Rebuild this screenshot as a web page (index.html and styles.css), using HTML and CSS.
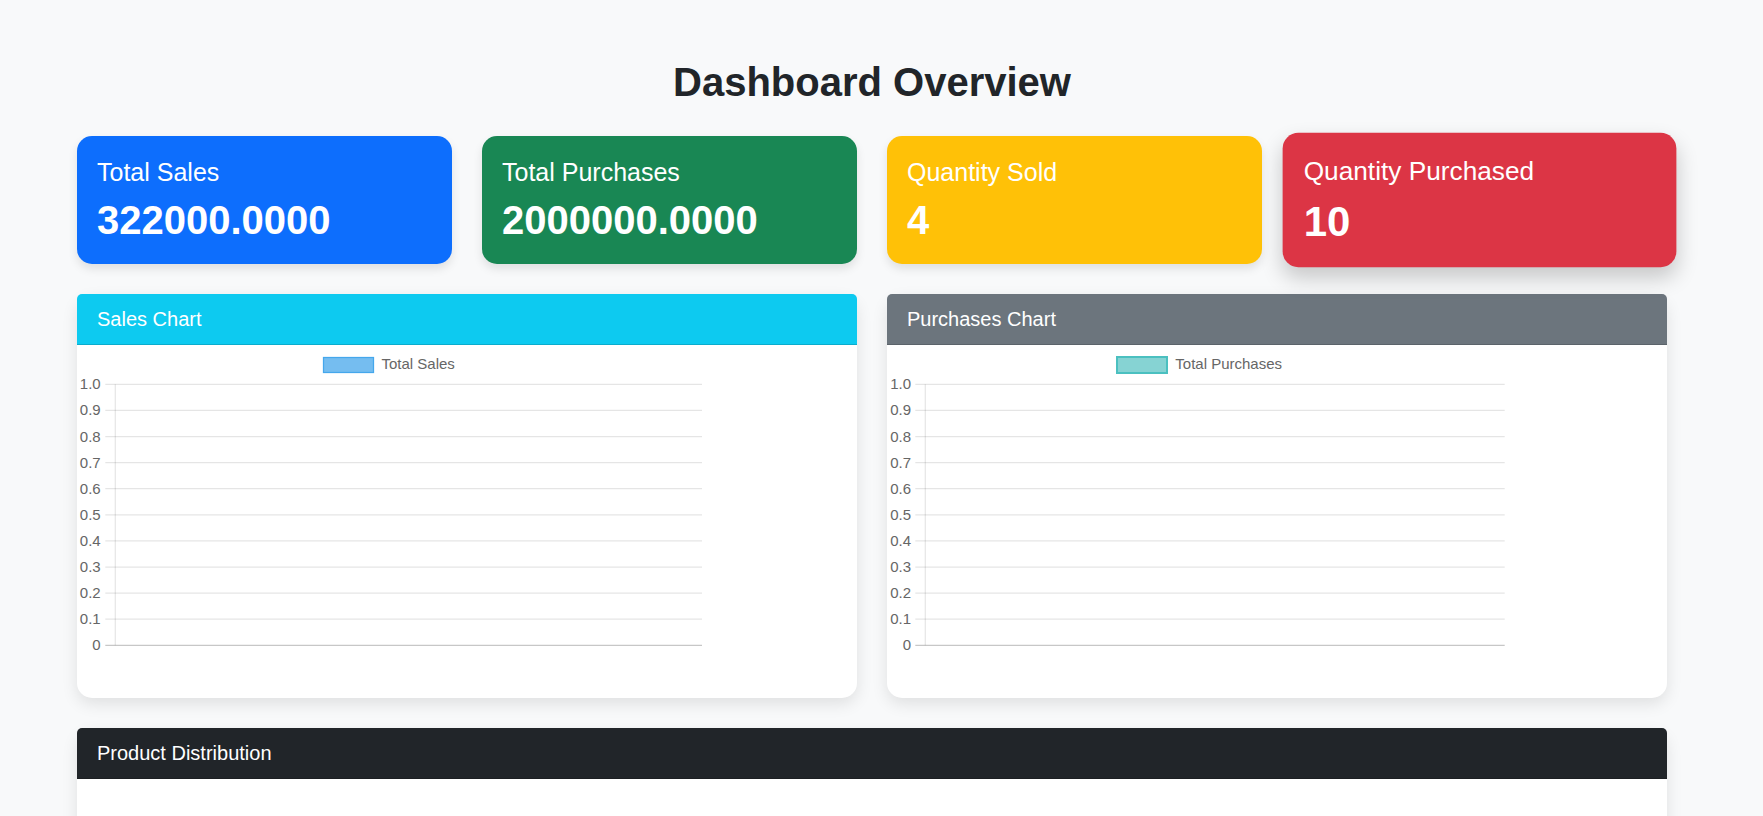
FILE: index.html
```html
<!DOCTYPE html>
<html lang="en">
<head>
<meta charset="utf-8">
<title>Dashboard Overview</title>
<link rel="stylesheet" href="styles.css">
</head>
<body>
<main class="dashboard">
  <h1 class="page-title">Dashboard Overview</h1>

  <section class="stats">
    <div class="stat stat-blue">
      <h5 class="stat-label">Total Sales</h5>
      <p class="stat-value">322000.0000</p>
    </div>
    <div class="stat stat-green">
      <h5 class="stat-label">Total Purchases</h5>
      <p class="stat-value">2000000.0000</p>
    </div>
    <div class="stat stat-yellow">
      <h5 class="stat-label">Quantity Sold</h5>
      <p class="stat-value">4</p>
    </div>
    <div class="stat stat-red is-hover">
      <h5 class="stat-label">Quantity Purchased</h5>
      <p class="stat-value">10</p>
    </div>
  </section>

  <section class="charts">
    <div class="panel">
      <div class="panel-header header-info">Sales Chart</div>
      <div class="panel-body">
        <svg class="chart" width="625" height="330" viewBox="0 0 625 330">
          <rect class="swatch-sales" x="246.5" y="12.5" width="50" height="15"/>
          <text class="legend" x="304.5" y="24.3">Total Sales</text>
          <g class="grid">
            <line x1="28.3" x2="625" y1="39.3" y2="39.3"/>
            <line x1="28.3" x2="625" y1="65.4" y2="65.4"/>
            <line x1="28.3" x2="625" y1="91.5" y2="91.5"/>
            <line x1="28.3" x2="625" y1="117.6" y2="117.6"/>
            <line x1="28.3" x2="625" y1="143.7" y2="143.7"/>
            <line x1="28.3" x2="625" y1="169.8" y2="169.8"/>
            <line x1="28.3" x2="625" y1="195.9" y2="195.9"/>
            <line x1="28.3" x2="625" y1="222" y2="222"/>
            <line x1="28.3" x2="625" y1="248.1" y2="248.1"/>
            <line x1="28.3" x2="625" y1="274.2" y2="274.2"/>
            <line x1="38.3" x2="38.3" y1="39.3" y2="300.3"/>
          </g>
          <line class="zero" x1="28.3" x2="625" y1="300.3" y2="300.3"/>
          <g class="ticks">
            <text x="23.7" y="44.3">1.0</text>
            <text x="23.7" y="70.4">0.9</text>
            <text x="23.7" y="96.5">0.8</text>
            <text x="23.7" y="122.6">0.7</text>
            <text x="23.7" y="148.7">0.6</text>
            <text x="23.7" y="174.8">0.5</text>
            <text x="23.7" y="200.9">0.4</text>
            <text x="23.7" y="227">0.3</text>
            <text x="23.7" y="253.1">0.2</text>
            <text x="23.7" y="279.2">0.1</text>
            <text x="23.7" y="305.3">0</text>
          </g>
        </svg>
      </div>
    </div>

    <div class="panel">
      <div class="panel-header header-secondary">Purchases Chart</div>
      <div class="panel-body">
        <svg class="chart" width="620" height="330" viewBox="0 0 620 330">
          <rect class="swatch-purchases" x="230" y="12" width="50" height="16"/>
          <text class="legend" x="288.3" y="24.3">Total Purchases</text>
          <g class="grid">
            <line x1="28.3" x2="617.7" y1="39.3" y2="39.3"/>
            <line x1="28.3" x2="617.7" y1="65.4" y2="65.4"/>
            <line x1="28.3" x2="617.7" y1="91.5" y2="91.5"/>
            <line x1="28.3" x2="617.7" y1="117.6" y2="117.6"/>
            <line x1="28.3" x2="617.7" y1="143.7" y2="143.7"/>
            <line x1="28.3" x2="617.7" y1="169.8" y2="169.8"/>
            <line x1="28.3" x2="617.7" y1="195.9" y2="195.9"/>
            <line x1="28.3" x2="617.7" y1="222" y2="222"/>
            <line x1="28.3" x2="617.7" y1="248.1" y2="248.1"/>
            <line x1="28.3" x2="617.7" y1="274.2" y2="274.2"/>
            <line x1="38.3" x2="38.3" y1="39.3" y2="300.3"/>
          </g>
          <line class="zero" x1="28.3" x2="617.7" y1="300.3" y2="300.3"/>
          <g class="ticks">
            <text x="24" y="44.3">1.0</text>
            <text x="24" y="70.4">0.9</text>
            <text x="24" y="96.5">0.8</text>
            <text x="24" y="122.6">0.7</text>
            <text x="24" y="148.7">0.6</text>
            <text x="24" y="174.8">0.5</text>
            <text x="24" y="200.9">0.4</text>
            <text x="24" y="227">0.3</text>
            <text x="24" y="253.1">0.2</text>
            <text x="24" y="279.2">0.1</text>
            <text x="24" y="305.3">0</text>
          </g>
        </svg>
      </div>
    </div>
  </section>

  <section class="panel">
    <div class="panel-header header-dark">Product Distribution</div>
    <div class="panel-body panel-body-tall"></div>
  </section>
</main>
</body>
</html>
```

FILE: styles.css
```css
* {
  box-sizing: border-box;
}

html, body {
  margin: 0;
  padding: 0;
}

body {
  background: #f8f9fa;
  color: #212529;
  font-family: "Liberation Sans", Arial, sans-serif;
  overflow: hidden;
}

.dashboard {
  width: 1590px;
  margin-left: 77px;
  padding-top: 58px;
}

.page-title {
  margin: 0 0 30px;
  font-size: 40px;
  line-height: 48px;
  font-weight: 700;
  text-align: center;
  color: #212529;
}

.stats {
  display: grid;
  grid-template-columns: repeat(4, 1fr);
  gap: 30px;
  margin-bottom: 30px;
}

.stat {
  height: 128px;
  padding: 21px 20px 20px;
  border-radius: 15px;
  color: #fff;
  box-shadow: 0 5px 10px rgba(0, 0, 0, 0.1);
}

.stat-blue { background: #0d6efd; }
.stat-green { background: #198754; }
.stat-yellow { background: #ffc107; }
.stat-red { background: #dc3545; }

.is-hover {
  transform: scale(1.05);
  box-shadow: 0 10px 20px rgba(0, 0, 0, 0.2);
}

.stat-label {
  margin: 0 0 9px;
  font-size: 25px;
  line-height: 1.2;
  font-weight: 400;
}

.stat-value {
  margin: 0;
  font-size: 40px;
  line-height: 48px;
  font-weight: 700;
}

.charts {
  display: grid;
  grid-template-columns: 1fr 1fr;
  gap: 30px;
  margin-bottom: 30px;
}

.panel {
  background: #fff;
  border-radius: 15px;
  box-shadow: 0 6px 16px rgba(0, 0, 0, 0.1);
}

.panel-header {
  padding: 10px 20px;
  font-size: 20px;
  line-height: 30px;
  color: #fff;
  border-radius: 5px 5px 0 0;
  border-bottom: 1px solid rgba(0, 0, 0, 0.15);
}

.header-info { background: #0dcaf0; }
.header-secondary { background: #6c757d; }
.header-dark { background: #212529; }

.panel-body {
  height: 353px;
}

.panel-body-tall {
  height: 300px;
}

.chart {
  display: block;
}

.chart .legend {
  font-family: "Liberation Sans", Arial, sans-serif;
  font-size: 15px;
  fill: #666;
}

.chart .ticks text {
  font-family: "Liberation Sans", Arial, sans-serif;
  font-size: 15px;
  fill: #666;
  text-anchor: end;
}

.chart .grid line {
  stroke: rgba(0, 0, 0, 0.1);
  stroke-width: 1.25;
}

.chart .zero {
  stroke: rgba(0, 0, 0, 0.22);
  stroke-width: 1.25;
}

.swatch-sales {
  fill: #75bdf0;
  stroke: #45a7ec;
  stroke-width: 1.25;
}

.swatch-purchases {
  fill: #86d3d3;
  stroke: #4bc0c0;
  stroke-width: 2;
}
```
